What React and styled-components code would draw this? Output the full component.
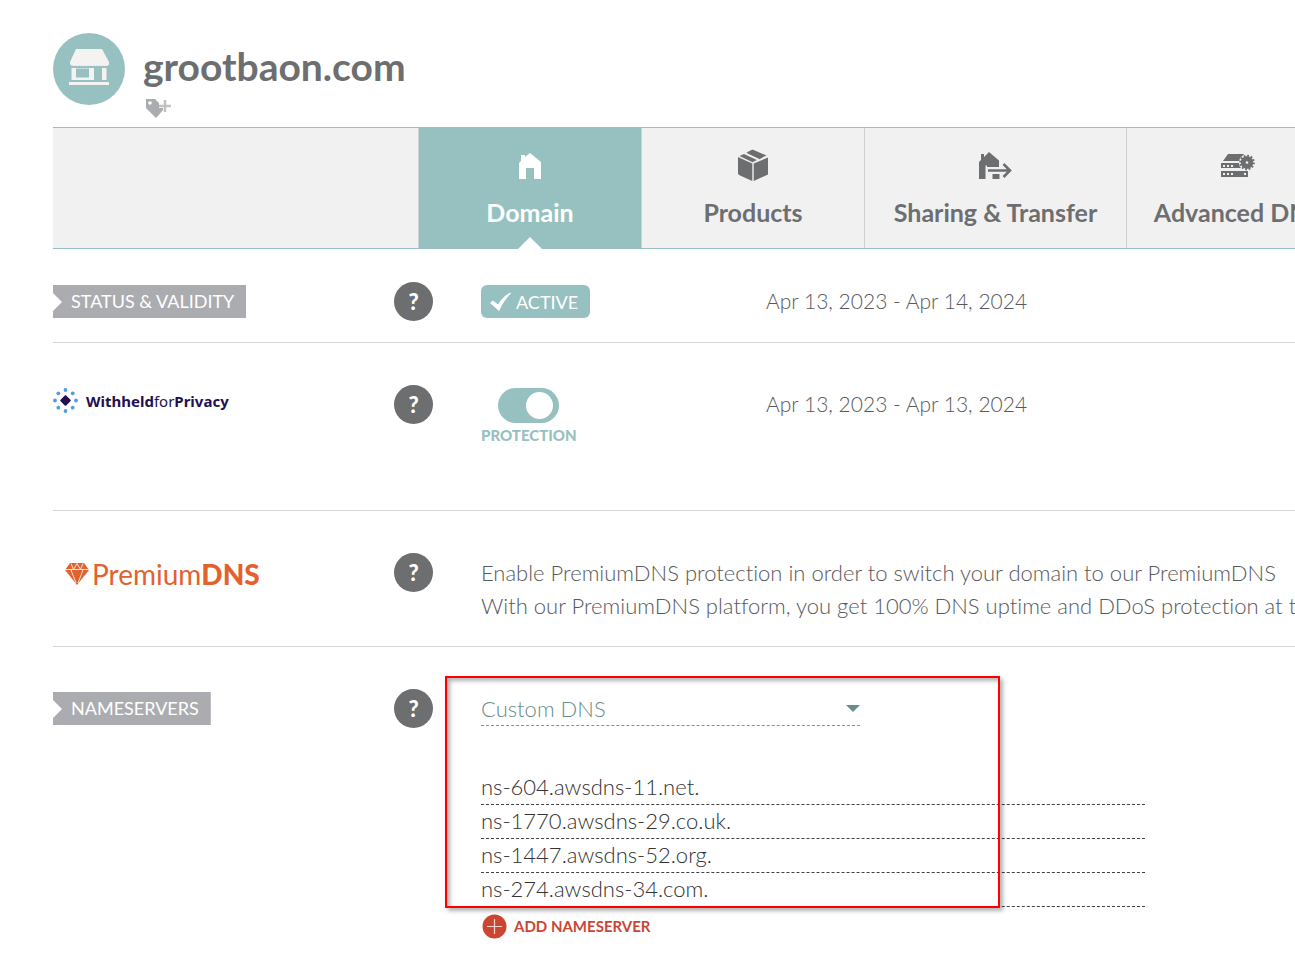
import React, { useState } from "react";
import styled, { createGlobalStyle } from "styled-components";

const teal = "#97c1c0";
const grey = "#6d6e70";
const red = "#cb4632";
const sans = 'Lato, "Open Sans", sans-serif';

const GlobalStyle = createGlobalStyle`
  *, *::before, *::after { box-sizing: border-box; }
  body {
    margin: 0;
    background: #fff;
    color: ${grey};
    font-family: ${sans};
    font-variant-ligatures: none;
    overflow-x: hidden;
  }
  button, input, select { font-family: inherit; margin: 0; }
`;

const Page = styled.main`
  padding: 33px 0 24px 53px;
  overflow: hidden;
`;

const Header = styled.header`
  display: flex;
  gap: 18px;
  height: 94px;
`;

const Title = styled.h1`
  margin: 0;
  padding-top: 9px;
  font-size: 39px;
  line-height: 48px;
  font-weight: 700;
`;

const TagButton = styled.button`
  display: block;
  margin-top: 9px;
  margin-left: 3px;
  padding: 0;
  border: 0;
  background: none;
  svg { display: block; }
`;

const Tabs = styled.nav`
  display: flex;
  height: 122px;
  padding-left: 365px;
  background: #f1f1f1;
  border-top: 1px solid ${teal};
  border-bottom: 1px solid ${teal};
`;

const Tab = styled.a`
  position: relative;
  display: flex;
  flex: none;
  flex-direction: column;
  align-items: center;
  gap: 12px;
  width: ${(p) => (p.$wide ? 262 : 223)}px;
  padding-top: 20px;
  border-left: 1px solid #cfd0d0;
  color: ${(p) => (p.$active ? "#fff" : grey)};
  background: ${(p) => (p.$active ? teal : "transparent")};
  font-size: 25px;
  line-height: 32px;
  font-weight: 700;
  text-decoration: none;
  white-space: nowrap;
  svg { display: block; }
`;

const Pointer = styled.span`
  position: absolute;
  bottom: -1px;
  left: 50%;
  margin-left: -12px;
  border: 12px solid transparent;
  border-top: 0;
  border-bottom-color: #fff;
`;

const Row = styled.section`
  display: grid;
  grid-template-columns: 341px 87px 285px minmax(0, 1fr);
  align-items: start;
  padding: ${(p) => (p.$compact ? 33 : 42)}px 0 ${(p) => p.$bottom}px;
  border-bottom: ${(p) => (p.$last ? 0 : 1)}px solid #d4d4d5;
`;

const Cell = styled.div`
  padding-top: 3px;
  grid-column: ${(p) => (p.$span ? "3 / -1" : "auto")};
  color: #58595b;
  font-size: 22px;
  line-height: 32px;
  font-weight: 300;
  white-space: nowrap;
`;

const Ribbon = styled.h2`
  display: inline-block;
  margin: 0;
  padding: 0 12px 1px 18px;
  background: #abacb0;
  clip-path: polygon(0 0, 100% 0, 100% 100%, 0 100%, 0 26px, 9px 17px, 0 8px);
  color: #fff;
  font-size: 18px;
  line-height: 32px;
  font-weight: 400;
  vertical-align: top;
`;

const Help = styled.button`
  width: 39px;
  height: 39px;
  padding: 0;
  border: 0;
  border-radius: 50%;
  background: ${grey};
  color: #fff;
  font-size: 22px;
  line-height: 39px;
  font-weight: 900;
`;

const Badge = styled.span`
  display: inline-flex;
  align-items: center;
  gap: 5px;
  height: 33px;
  padding: 0 12px 0 9px;
  border-radius: 6px;
  background: ${teal};
  color: #fff;
  font-size: 18px;
  font-weight: 400;
  vertical-align: top;
`;

const Dates = styled.span`
  display: block;
  font-size: 21px;
`;

const Protection = styled.label`
  display: inline-flex;
  flex-direction: column;
  align-items: center;
  gap: 2px;
  color: ${teal};
  font-size: 15px;
  line-height: 20px;
  font-weight: 900;
`;

const Switch = styled.input`
  appearance: none;
  display: flex;
  width: 61px;
  height: 35px;
  padding: 4px 6px;
  border-radius: 18px;
  background: ${(p) => (p.checked ? teal : "#abacb0")};
  justify-content: ${(p) => (p.checked ? "flex-end" : "flex-start")};
  &::before {
    content: "";
    width: 27px;
    height: 27px;
    border-radius: 50%;
    background: #fff;
  }
`;

const PrivacyBrand = styled.div`
  display: flex;
  align-items: center;
  gap: 8px;
  height: 25px;
  color: #22104f;
  font-family: "Noto Sans", sans-serif;
  font-size: 15px;
  font-weight: 400;
  b { font-weight: 700; }
`;

const DnsBrand = styled.div`
  display: flex;
  align-items: center;
  gap: 3px;
  padding-left: 12px;
  color: #e2622f;
  font-size: 28px;
  line-height: 36px;
  font-weight: 400;
  b { font-weight: 900; }
`;

const Text = styled.p`
  margin: 0;
  line-height: 33px;
`;

const Servers = styled.div`
  position: relative;
  width: 664px;
`;

const Highlight = styled.div`
  position: absolute;
  top: -16px;
  left: -36px;
  width: 555px;
  height: 232px;
  border: 2px solid #fe0000;
  box-shadow: 3px 3px 4px rgba(0, 0, 0, 0.3), inset 3px 3px 4px rgba(0, 0, 0, 0.3);
  pointer-events: none;
`;

const SelectBox = styled.div`
  display: grid;
  align-items: center;
  width: 379px;
  height: 34px;
  margin-bottom: 45px;
  border-bottom: 1px dashed #789695;
  color: #6a8c8b;
  > * { grid-area: 1 / 1; }
  svg { justify-self: end; pointer-events: none; }
`;

const Select = styled.select`
  appearance: none;
  width: 100%;
  height: 32px;
  padding: 0;
  border: 0;
  background: none;
  color: inherit;
  font-size: 22px;
  font-weight: 300;
`;

const ServerInput = styled.input`
  display: block;
  width: 100%;
  height: 34px;
  padding: 0 0 2px;
  border: 0;
  border-bottom: 1px dashed #414042;
  border-radius: 0;
  background: none;
  color: #333234;
  font-size: 22px;
  font-weight: 300;
  outline: 0;
`;

const AddButton = styled.button`
  display: flex;
  align-items: center;
  gap: 7px;
  height: 26px;
  margin-top: 6px;
  padding: 0 0 0 1px;
  border: 0;
  background: none;
  color: ${red};
  font-size: 15px;
  font-weight: 700;
`;

const StoreIcon = () => (
  <svg width="72" height="72" viewBox="0 0 72 72" aria-hidden="true">
    <circle cx="36" cy="36" r="36" fill={teal} />
    <g fill="#f4f3f2">
      <path d="M23 16h26l7 13v2q-1 3-3 1.500-1.500 1.500-3 0-1.500 1.500-3 0-1.500 1.500-3 0-1.500 1.500-3 0-1.500 1.500-3 0-1.500 1.500-3 0-1.500 1.500-3 0-1.500 1.500-3 0-1.500 1.500-3 0-1.500 1.500-3 0-1.500 1.500-3 0-2 1-3-1.500v-2z" />
      <path fillRule="evenodd" d="M18.500 35h35v12H49V35h-8v12H18.500zM23 35.500v9h13v-9z" />
      <path d="M16 49h40v3H16z" />
    </g>
  </svg>
);

const TagIcon = () => (
  <svg width="26" height="20" viewBox="0 0 26 20" aria-hidden="true">
    <path fill="#abacaf" fillRule="evenodd" d="M0 0h9l4 4v5h4v2l-7 8L0 9zM4 2.200a1.800 1.800 0 1 0 0 3.600 1.800 1.800 0 0 0 0-3.600z" />
    <path d="M19 1v12M13 7h12" stroke="#bfc0c2" strokeWidth="2.500" />
  </svg>
);

const HomeIcon = () => (
  <svg width="36" height="36" viewBox="0 0 36 36" fill="currentColor" aria-hidden="true">
    <path d="M7 15l2-2V7h4v2l5-4 11 9v17h-7V20h-8v11H7z" />
  </svg>
);

const BoxIcon = () => (
  <svg width="36" height="36" viewBox="0 0 36 36" fill="currentColor" aria-hidden="true">
    <path d="M5 10l12.300 5.500V33L5 27.500 3 26V9zM33 9.500l-14.300 6V33L33 26.500zM4.500 8L9 6l13 6-4.500 2.200zM11 5l3.500-1.500L28 9.500 24 11.200zM12 4.200L17.500 1.500 31.500 7.500 27 9.500z" />
    <path d="M10 5.200l13.500 6.200" stroke="#f1f1f1" strokeWidth="1.300" />
  </svg>
);

const TransferIcon = () => (
  <svg width="36" height="36" viewBox="0 0 36 36" fill="currentColor" aria-hidden="true">
    <path d="M1 14l2-2V6h3v3l5-5 10 8.500V19H9v-1.500H7.500V31H1zM14.500 26h7v5h-7z" />
    <path d="M10 22.500h22M25.500 16l6.500 6.500-6.500 6.500" fill="none" stroke="currentColor" strokeWidth="2.600" />
  </svg>
);

const ServerIcon = () => (
  <svg width="36" height="36" viewBox="0 0 36 36" aria-hidden="true">
    <g fill="currentColor">
      <path d="M8 6h16l-4 7H3zM1 15h21v5H1zM1 23h27v6H1z" />
      <circle cx="27" cy="14.500" r="7.200" stroke="#f1f1f1" strokeWidth="2" />
    </g>
    <circle cx="27" cy="14.500" r="6.800" fill="none" stroke="currentColor" strokeWidth="2" strokeDasharray="1.780 1.780" />
    <circle cx="27" cy="14.500" r="6" fill="currentColor" />
    <g fill="#f1f1f1">
      <circle cx="27" cy="14.500" r="1.300" />
      <path d="M3 17h2v2H3zM7 17h2v2H7zM11 17h2v2h-2zM3 25h2v2H3zM7 25h2v2H7zM11 25h2v2h-2zM24 25h2v2h-2z" />
    </g>
  </svg>
);

const CheckIcon = () => (
  <svg width="21" height="20" viewBox="0 0 21 20" aria-hidden="true">
    <path fill="#fff" d="M0 11l3-2.500L8 12.500Q13 4 20.500.500L21 1.500Q14 8 9 19z" />
  </svg>
);

const PrivacyIcon = () => (
  <svg width="25" height="25" viewBox="0 0 25 25" aria-hidden="true">
    <rect x="8.500" y="8.500" width="8" height="8" rx="1" transform="rotate(45 12.500 12.500)" fill="#22104f" />
    <g fill="#4a9fe8">
      {[[12.500, 2], [19.700, 5.300], [23, 12.500], [19.700, 19.700], [12.500, 23], [5.300, 19.700], [2, 12.500], [5.300, 5.300]].map(([x, y]) => (
        <circle key={`${x}-${y}`} cx={x} cy={y} r="1.900" />
      ))}
    </g>
  </svg>
);

const DiamondIcon = () => (
  <svg width="24" height="24" viewBox="0 0 24 24" aria-hidden="true">
    <path fill="#e2622f" d="M5 1h14l5 7-12 15L0 8z" />
    <path d="M0 7.500h24M6 1.500l2.500 6L12 1.500l3.500 6 2.500-6M6 8l5 13M18 8l-5 13" fill="none" stroke="#fff" strokeWidth=".8" />
  </svg>
);

const PlusIcon = () => (
  <svg width="25" height="25" viewBox="0 0 25 25" aria-hidden="true">
    <circle cx="12.500" cy="12.500" r="12" fill={red} />
    <path d="M12.500 5v15M5 12.500h15" stroke="#f3d3cd" strokeWidth="1.200" />
  </svg>
);

const tabs = [
  { label: "Domain", icon: HomeIcon, active: true },
  { label: "Products", icon: BoxIcon },
  { label: "Sharing & Transfer", icon: TransferIcon, wide: true },
  { label: "Advanced DNS", icon: ServerIcon },
];

export default function App() {
  const [isProtected, setProtected] = useState(true);
  const [servers, setServers] = useState([
    "ns-604.awsdns-11.net.",
    "ns-1770.awsdns-29.co.uk.",
    "ns-1447.awsdns-52.org.",
    "ns-274.awsdns-34.com.",
  ]);
  const edit = (i, value) => setServers(servers.map((s, n) => (n === i ? value : s)));

  return (
    <Page>
      <GlobalStyle />
      <Header>
        <StoreIcon />
        <div>
          <Title>grootbaon.com</Title>
          <TagButton aria-label="Add tag"><TagIcon /></TagButton>
        </div>
      </Header>
      <Tabs>
        {tabs.map(({ label, icon: Icon, active, wide }) => (
          <Tab key={label} href="#" $active={active} $wide={wide}>
            <Icon />
            {label}
            {active && <Pointer />}
          </Tab>
        ))}
      </Tabs>

      <Row $compact $bottom={21}>
        <Cell><Ribbon>STATUS &amp; VALIDITY</Ribbon></Cell>
        <Help>?</Help>
        <Cell><Badge><CheckIcon />ACTIVE</Badge></Cell>
        <Cell><Dates>Apr 13, 2023 - Apr 14, 2024</Dates></Cell>
      </Row>

      <Row $bottom={65}>
        <Cell>
          <PrivacyBrand>
            <PrivacyIcon />
            <span><b>Withheld</b>for<b>Privacy</b></span>
          </PrivacyBrand>
        </Cell>
        <Help>?</Help>
        <Cell>
          <Protection>
            <Switch type="checkbox" role="switch" checked={isProtected} onChange={(e) => setProtected(e.target.checked)} />
            PROTECTION
          </Protection>
        </Cell>
        <Cell><Dates>Apr 13, 2023 - Apr 13, 2024</Dates></Cell>
      </Row>

      <Row $bottom={24}>
        <Cell>
          <DnsBrand>
            <DiamondIcon />
            <span>Premium<b>DNS</b></span>
          </DnsBrand>
        </Cell>
        <Help>?</Help>
        <Cell $span>
          <Text>Enable PremiumDNS protection in order to switch your domain to our PremiumDNS</Text>
          <Text>With our PremiumDNS platform, you get 100% DNS uptime and DDoS protection at the</Text>
        </Cell>
      </Row>

      <Row $last $bottom={0}>
        <Cell><Ribbon>NAMESERVERS</Ribbon></Cell>
        <Help>?</Help>
        <Cell $span>
          <Servers>
            <SelectBox>
              <Select aria-label="Nameserver type" defaultValue="Custom DNS">
                <option>Custom DNS</option>
              </Select>
              <svg width="14" height="7" viewBox="0 0 14 7" aria-hidden="true">
                <path d="M0 0h14L7 7z" fill="currentColor" />
              </svg>
            </SelectBox>
            {servers.map((server, i) => (
              <ServerInput key={i} aria-label={`Nameserver ${i + 1}`} value={server} onChange={(e) => edit(i, e.target.value)} />
            ))}
            <AddButton onClick={() => setServers([...servers, ""])}>
              <PlusIcon />
              ADD NAMESERVER
            </AddButton>
            <Highlight />
          </Servers>
        </Cell>
      </Row>
    </Page>
  );
}
